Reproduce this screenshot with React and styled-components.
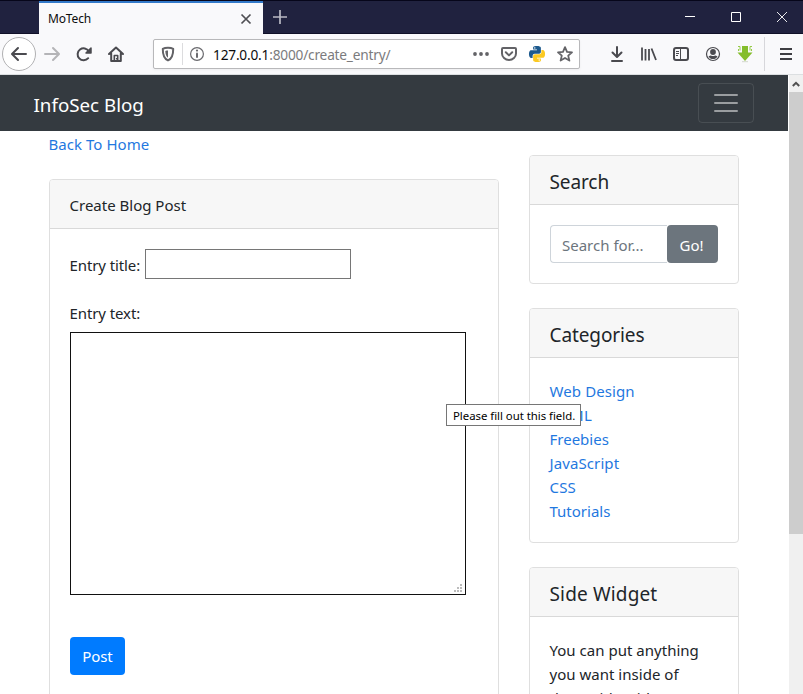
import React from "react";
import styled, { createGlobalStyle, css } from "styled-components";

const Global = createGlobalStyle`
  *, *::before, *::after { box-sizing: border-box; }
  html, body { margin: 0; padding: 0; }
  body {
    width: 803px; height: 694px; overflow: hidden; background: #fff;
    font-family: "Noto Sans", "Open Sans", sans-serif;
    font-size: 15px; line-height: 24px; color: #212529;
  }
`;

const Window = styled.div`
  width: 803px; height: 694px; display: flex; flex-direction: column; overflow: hidden;
`;
const TitleBar = styled.div`
  height: 34px; flex: none; display: flex; background: #20223f;
  border-top: 1px solid #06061a; border-bottom: 1px solid #101028; padding-left: 39px;
`;
const Tab = styled.div`
  width: 224px; height: 33px; background: #f9f9fb; border-top: 2px solid #3279c9;
  display: flex; align-items: center; justify-content: space-between; padding: 0 11px 0 9px;
  font-size: 12px; color: #0c0c0d; letter-spacing: -0.15px;
`;
const NewTab = styled.div`
  width: 34px; display: flex; align-items: center; justify-content: center;
`;
const WindowButtons = styled.div`
  margin-left: auto; display: flex;
`;
const WindowButton = styled.div`
  width: 46px; display: flex; align-items: center; justify-content: center;
  &:last-child { width: 44px; padding-left: 2px; }
`;
const Toolbar = styled.div`
  height: 41px; flex: none; background: #f9f9fb; border-bottom: 1px solid #dcdfe1;
  display: flex; align-items: center;
`;
const Back = styled.div`
  width: 34px; height: 34px; margin-left: 2px; border: 1px solid #b1b1b3; border-radius: 50%;
  background: #fff; display: flex; align-items: center; justify-content: center;
`;
const NavIcons = styled.div`
  display: flex; gap: 16px; margin-left: 8px;
`;
const Icon = styled.svg`
  display: block; flex: none; overflow: visible;
`;
const UrlBar = styled.div`
  width: 427px; height: 30px; margin-left: 29px; display: flex; align-items: center;
  background: #fff; border: 1px solid #b8b8ba; border-radius: 2px; padding: 0 6px 0 6px;
  box-shadow: 0 1px 3px rgba(0,0,0,.05);
`;
const UrlSplit = styled.div`
  width: 1px; height: 22px; background: #dcdcde; margin: 0 6px 0 6px;
`;
const Url = styled.div`
  margin-left: 8px; padding-top: 1px; font-size: 13.7px; color: #7b7b7d; white-space: nowrap; letter-spacing: -0.2px;
  b { font-weight: 400; color: #0c0c0d; }
`;
const UrlActions = styled.div`
  margin-left: auto; display: flex; gap: 12px;
`;
const ToolIcons = styled.div`
  margin-left: 29px; display: flex; gap: 16px;
`;
const MenuButton = styled.div`
  height: 34px; margin-left: 11px; padding-left: 15px; border-left: 1px solid #d7d7db;
  display: flex; align-items: center;
`;

const Viewport = styled.div`
  flex: 1; min-height: 0; display: flex; overflow: hidden;
`;
const Page = styled.div`
  width: 788px; margin-right: 1px; height: 100%; overflow: hidden; text-indent: -0.5px;
`;
const Scrollbar = styled.div`
  width: 14px; background: #f0f0f0; display: flex; flex-direction: column; align-items: center;
`;
const ScrollUp = styled.div`
  height: 17px; display: flex; align-items: center;
`;
const Thumb = styled.div`
  width: 14px; height: 442px; background: #cdcdcd;
`;
const Navbar = styled.nav`
  height: 56px; background: #343a40; display: flex; align-items: center;
  justify-content: space-between; padding: 0 34px;
`;
const Brand = styled.div`
  font-size: 18.75px; color: #fff; line-height: 30px; padding-top: 3px;
`;
const Toggler = styled.div`
  width: 56px; height: 40px; border: 1px solid rgba(255,255,255,.1); border-radius: 4px;
  display: flex; align-items: center; justify-content: center;
`;
const Columns = styled.div`
  display: grid; grid-template-columns: 450px 210px; column-gap: 30px; padding-left: 49px;
  align-items: start;
`;
const Main = styled.main``;
const Side = styled.aside`
  padding-top: 24px; display: flex; flex-direction: column; gap: 24px;
`;
const Link = styled.a`
  display: block; color: #1f78e0; letter-spacing: ${(p) => p.$ls || 0}px; white-space: nowrap;
`;
const BackLink = styled(Link)`
  padding-top: 1px; height: 24px; margin-bottom: 24px;
`;
const Card = styled.section`
  border: 1px solid #dfdfdf; border-radius: 4px; background: #fff; overflow: hidden;
`;
const CardHeader = styled.div`
  height: 49px; padding: 13px 20px 0; background: #f7f7f7; border-bottom: 1px solid #d9d9d9;
  letter-spacing: ${(p) => p.$ls || 0}px;
  ${(p) => p.$large && css`font-size: 19px; padding-top: 14px;`}
`;
const CardBody = styled.div`
  padding: 20px;
`;
const FieldRow = styled.div`
  display: flex; height: 30px; align-items: center; justify-content: space-between; width: 281px;
`;
const Label = styled.label`
  display: block; padding-top: 2px; white-space: nowrap; letter-spacing: -0.1px;
`;
const TextLabel = styled(Label)`
  margin-top: 21px; padding-top: 1px; height: 32px;
`;
const TitleInput = styled.input`
  width: 206px; height: 30px; border: 1px solid #767676; padding: 0 4px; font: inherit; outline: 0;
`;
const TextBox = styled.div`
  width: 396px; height: 263px; border: 1px solid #111; background: #fff;
  display: flex; align-items: flex-end; justify-content: flex-end; padding: 0 3px 2px 0;
`;
const Button = styled.button`
  display: block; height: 38px; border: 0; border-radius: 4px; color: #fff; font: inherit;
  padding: ${(p) => (p.$primary ? "0" : "2px 2px 0 0")};
  background: ${(p) => (p.$primary ? "#007bff" : "#6c757d")};
  width: ${(p) => (p.$primary ? 55 : 51)}px; letter-spacing: ${(p) => p.$ls || 0}px;
`;
const Actions = styled.div`
  margin-top: 42px; height: 80px;
`;
const SearchGroup = styled.div`
  display: flex;
`;
const SearchInput = styled.input`
  width: 117px; height: 38px; border: 1px solid #ced4da; border-right: 0; border-radius: 4px 0 0 4px;
  padding: 2px 0 0 11px; font: inherit; outline: 0; letter-spacing: ${(p) => p.$ls || 0}px;
  &::placeholder { color: #6c757d; opacity: 1; }
`;
const LinkList = styled.div`
  padding-top: 1px; height: 144px;
`;
const WidgetText = styled.div`
  padding-top: 1px;
`;
const Line = styled.div`
  white-space: nowrap; letter-spacing: 0.02px;
`;
const Tooltip = styled.div`
  position: absolute; left: 446px; top: 404px; width: 135px; height: 22px; background: #fff;
  border: 1px solid #767676; color: #000; font-size: 11.4px; line-height: 21px; padding-left: 6px;
  white-space: nowrap; letter-spacing: -0.03px;
`;

const INK = "#4a4a4f";
const GREY = "#636367";
const S = { fill: "none", stroke: INK, strokeWidth: 2, strokeLinecap: "round", strokeLinejoin: "round" };

const PY_BLUE = "M14.25.18l.9.2.73.26.59.3.45.32.34.34.25.34.16.33.1.3.04.26.02.2-.01.13V8.5l-.05.63-.13.55-.21.46-.26.38-.3.31-.33.25-.35.19-.35.14-.33.1-.3.07-.26.04-.21.02H8.77l-.69.05-.59.14-.5.22-.41.27-.33.32-.27.35-.2.36-.15.37-.1.35-.07.32-.04.27-.02.21v3.06H3.17l-.21-.03-.28-.07-.32-.12-.35-.18-.36-.26-.36-.36-.35-.46-.32-.59-.28-.73-.21-.88-.14-1.05-.05-1.23.06-1.22.16-1.04.24-.87.32-.71.36-.57.4-.44.42-.33.42-.24.4-.16.36-.1.32-.05.24-.01h.16l.06.01h8.16v-.83H6.18l-.01-2.75-.02-.37.05-.34.11-.31.17-.28.25-.26.31-.23.38-.2.44-.18.51-.15.58-.12.64-.1.71-.06.77-.04.84-.02 1.27.05zm-6.3 1.98l-.23.33-.08.41.08.41.23.34.33.22.41.09.41-.09.33-.22.23-.34.08-.41-.08-.41-.23-.33-.33-.22-.41-.09-.41.09z";
const PY_YELLOW = "M21.04 6.11l.28.06.32.12.35.18.36.27.36.35.35.47.32.59.28.73.21.88.14 1.04.05 1.23-.06 1.23-.16 1.04-.24.86-.32.71-.36.57-.4.45-.42.33-.42.24-.4.16-.36.09-.32.05-.24.02-.16-.01h-8.22v.82h5.84l.01 2.76.02.36-.05.34-.11.31-.17.29-.25.25-.31.24-.38.2-.44.17-.51.15-.58.13-.64.09-.71.07-.77.04-.84.01-1.27-.04-1.07-.14-.9-.2-.73-.25-.59-.3-.45-.33-.34-.34-.25-.34-.16-.33-.1-.3-.04-.25-.02-.2.01-.13v-5.34l.05-.64.13-.54.21-.46.26-.38.3-.32.33-.24.35-.2.35-.14.33-.1.3-.06.26-.04.21-.02.13-.01h5.84l.69-.05.59-.14.5-.21.41-.28.33-.32.27-.35.2-.36.15-.36.1-.35.07-.32.04-.28.02-.21V6.07h2.09l.14.01zm-6.47 14.25l-.23.33-.08.41.08.41.23.33.33.23.41.08.41-.08.33-.23.23-.33.08-.41-.08-.41-.23-.33-.33-.23-.41-.08-.41.08z";

function Svg({ size = 16, children }) {
  return <Icon width={size} height={size} viewBox={`0 0 ${size} ${size}`}>{children}</Icon>;
}

function Chrome() {
  return (
    <>
      <TitleBar>
        <Tab>
          MoTech
          <Svg size={12}><path d="M1.500 1.500l9 9M10.500 1.500l-9 9" {...S} stroke="#4f4f53" strokeWidth="1.700" strokeLinecap="butt" /></Svg>
        </Tab>
        <NewTab>
          <Svg size={14}><path d="M7 0v14M0 7h14" stroke="#b9b9c4" strokeWidth="1.700" /></Svg>
        </NewTab>
        <WindowButtons>
          <WindowButton><Svg size={10}><path d="M0 4.500h10" stroke="#fff" /></Svg></WindowButton>
          <WindowButton><Svg size={10}><path d="M.5 .5h9v9h-9z" fill="none" stroke="#fff" /></Svg></WindowButton>
          <WindowButton><Svg size={10}><path d="M0 0l10 10M10 0L0 10" stroke="#fff" strokeWidth=".9" /></Svg></WindowButton>
        </WindowButtons>
      </TitleBar>
      <Toolbar>
        <Back><Svg><path d="M15 8H1.500M7 2L1 8l6 6" {...S} /></Svg></Back>
        <NavIcons>
          <Svg><path d="M1 8h13.500M9 2l6 6-6 6" {...S} stroke="#b4b4b7" /></Svg>
          <Svg>
            <path d="M12.200 12.200A6 6 0 1 1 12.800 5.300" {...S} />
            <path d="M15 2v5h-5z" fill={INK} stroke={INK} strokeWidth="1.500" strokeLinejoin="round" />
          </Svg>
          <Svg>
            <path d="M1 8l7-6.500L15 8M3.200 7.500V15h9.600V7.500" {...S} />
            <path d="M6.300 15V9.500h3.400V15" {...S} strokeWidth="1.600" />
            <path d="M8.500 12v1.500" stroke={INK} strokeWidth="1.200" />
          </Svg>
        </NavIcons>
        <UrlBar>
          <Svg>
            <path d="M8 1.800c-2 0-4 .4-5.200 1.100C2.700 9 4 12.500 8 14.400c4-1.900 5.300-5.400 5.200-11.500C12 2.200 10 1.800 8 1.800z" {...S} stroke={GREY} />
            <path d="M8 4.500c-1 0-2 .2-2.700.4.100 3.500 1 5.600 2.700 6.800z" fill={GREY} />
          </Svg>
          <UrlSplit />
          <Svg>
            <circle cx="8" cy="8" r="6.400" {...S} stroke="#6a6a6e" strokeWidth="1.200" />
            <path d="M8 7.500v3.500" {...S} stroke="#6a6a6e" />
            <circle cx="8" cy="4.600" r="1.100" fill="#6a6a6e" />
          </Svg>
          <Url><b>127.0.0.1</b>:8000/create_entry/</Url>
          <UrlActions>
            <Svg><g fill={GREY}><circle cx="2" cy="8" r="1.900" /><circle cx="8" cy="8" r="1.900" /><circle cx="14" cy="8" r="1.900" /></g></Svg>
            <Svg>
              <path d="M2 2h12a1 1 0 0 1 1 1v4.500a7 6.500 0 0 1-14 0V3a1 1 0 0 1 1-1z" {...S} stroke={GREY} />
              <path d="M4.800 6.300L8 9.400l3.200-3.100" {...S} stroke={GREY} />
            </Svg>
            <Icon width="16" height="16" viewBox="0 0 24 24">
              <path d={PY_BLUE} fill="#1d5a8e" /><path d={PY_YELLOW} fill="#fbc922" />
            </Icon>
            <Svg><path d="M8 1.200l2 4.600 5 .5-3.800 3.300 1.200 5L8 12l-4.400 2.600 1.200-5L1 6.300l5-.5z" {...S} stroke={GREY} strokeWidth="1.800" /></Svg>
          </UrlActions>
        </UrlBar>
        <ToolIcons>
          <Svg><path d="M8 1v9M3.500 6.500L8 11l4.500-4.500M3 15h10" {...S} /></Svg>
          <Svg><path d="M1 1.500v13M4.500 3v11.500M8 3v11.500M10.500 2.500L15 14" {...S} strokeWidth="1.800" strokeLinecap="butt" /></Svg>
          <Svg>
            <rect x="1" y="2" width="14" height="12" rx="2" {...S} />
            <path d="M7.500 2v12" stroke={INK} /><path d="M3 5.500h3M3 7.500h3M3 9.500h2" stroke={INK} />
          </Svg>
          <Svg>
            <circle cx="8" cy="8" r="6.500" {...S} strokeWidth="1.200" />
            <circle cx="8" cy="6" r="2.900" fill={INK} />
            <path d="M3.500 10.500c1-1 2-1 2.500-1 1 .8 3 .8 4 0 .5 0 1.500 0 2.500 1a5.200 5.200 0 0 1-9 0z" fill={INK} />
          </Svg>
          <Svg>
            <path d="M5 0h6v6.500h4.500L8 15 .5 6.500H5z" fill="#84bd2c" />
            <path d="M1 .5h2M15 .5h-2M3 .5v4M13 .5v4M1.500 3v2M14.500 3v2" fill="none" stroke="#97cb4a" />
            <path d="M5 15.700h6" stroke="#d3d8cc" />
          </Svg>
        </ToolIcons>
        <MenuButton><Svg size={12}><path d="M0 1h12M0 6h12M0 11h12" stroke="#3e3e43" strokeWidth="1.800" /></Svg></MenuButton>
      </Toolbar>
    </>
  );
}

const categories = [["Web Design", 0.1], ["HTML", 0.5], ["Freebies", 0], ["JavaScript", 0.1], ["CSS", 0.2], ["Tutorials", 0]];

export default function App() {
  return (
    <Window>
      <Global />
      <Chrome />
      <Viewport>
        <Page>
          <Navbar>
            <Brand>InfoSec Blog</Brand>
            <Toggler>
              <Svg size={30}><path d="M4 7h22M4 15h22M4 23h22" stroke="rgba(255,255,255,.5)" strokeWidth="2" strokeLinecap="round" /></Svg>
            </Toggler>
          </Navbar>
          <Columns>
            <Main>
              <BackLink $ls={0.05}>Back To Home</BackLink>
              <Card>
                <CardHeader>Create Blog Post</CardHeader>
                <CardBody>
                  <FieldRow><Label>Entry title:</Label><TitleInput /></FieldRow>
                  <TextLabel>Entry text:</TextLabel>
                  <TextBox>
                    <Svg size={8}><path d="M6 0h2v2H6zM3 3h2v2H3zM6 3h2v2H6zM0 6h2v2H0zM3 6h2v2H3zM6 6h2v2H6z" fill="#bcbcbc" /></Svg>
                  </TextBox>
                  <Actions><Button $primary $ls={-0.1}>Post</Button></Actions>
                </CardBody>
              </Card>
            </Main>
            <Side>
              <Card>
                <CardHeader $large $ls={-0.1}>Search</CardHeader>
                <CardBody>
                  <SearchGroup><SearchInput placeholder="Search for..." /><Button>Go!</Button></SearchGroup>
                </CardBody>
              </Card>
              <Card>
                <CardHeader $large $ls={-0.1}>Categories</CardHeader>
                <CardBody>
                  <LinkList>{categories.map(([name, ls]) => <Link key={name} $ls={ls}>{name}</Link>)}</LinkList>
                </CardBody>
              </Card>
              <Card>
                <CardHeader $large $ls={0.15}>Side Widget</CardHeader>
                <CardBody>
                  <WidgetText>
                    <Line>You can put anything</Line>
                    <Line>you want inside of</Line>
                    <Line>these side widgets.</Line>
                  </WidgetText>
                </CardBody>
              </Card>
            </Side>
          </Columns>
        </Page>
        <Scrollbar>
          <ScrollUp><Svg size={8}><path d="M.8 6L4 2.800 7.200 6" fill="none" stroke="#505050" strokeWidth="2" /></Svg></ScrollUp>
          <Thumb />
        </Scrollbar>
      </Viewport>
      <Tooltip>Please fill out this field.</Tooltip>
    </Window>
  );
}
